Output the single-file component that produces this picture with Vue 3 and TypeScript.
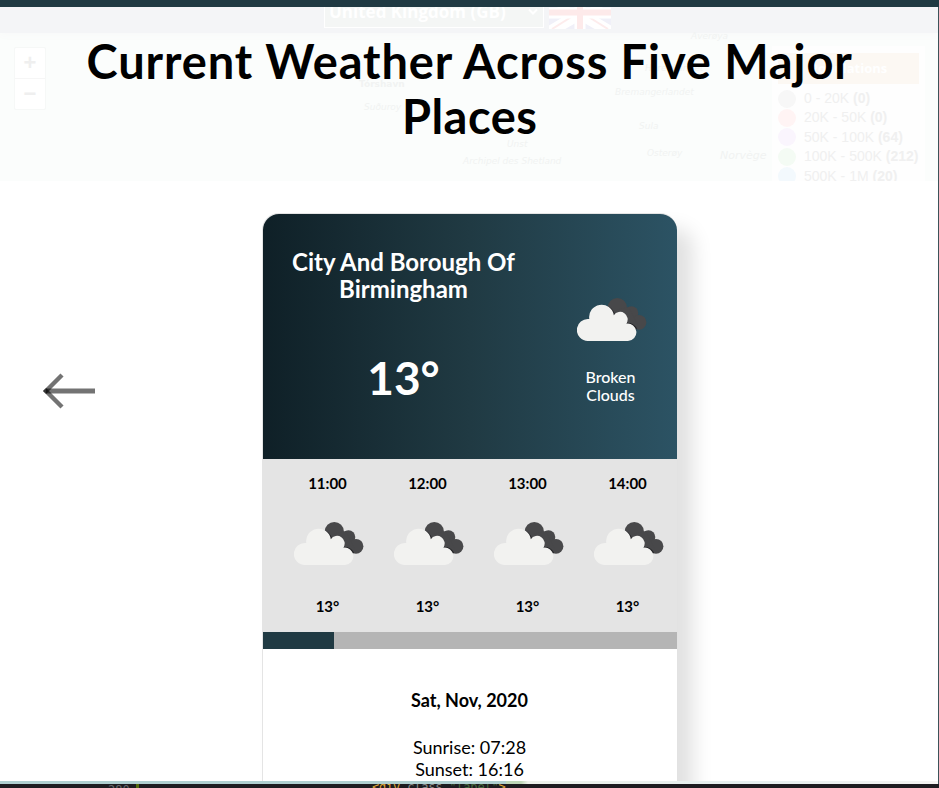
<script setup lang="ts">
import { defineComponent, h } from 'vue'

interface Hour {
  time: string
  temp: string
}

const hours: Hour[] = ['11:00', '12:00', '13:00', '14:00'].map((time) => ({ time, temp: '13°' }))

const legend = [
  { label: '0 - 20K', count: 0, tone: 'grey' },
  { label: '20K - 50K', count: 0, tone: 'red' },
  { label: '50K - 100K', count: 64, tone: 'purple' },
  { label: '100K - 500K', count: 212, tone: 'green' },
  { label: '500K - 1M', count: 20, tone: 'blue' },
]

const places = [
  { name: 'Tórshavn', cls: 'torshavn' },
  { name: 'Suðuroy', cls: 'suduroy' },
  { name: 'Unst', cls: 'unst' },
  { name: 'Archipel des Shetland', cls: 'shetland' },
  { name: 'Averøya', cls: 'averoya' },
  { name: 'Hareidlandet', cls: 'hareid' },
  { name: 'Bremangerlandet', cls: 'bremanger' },
  { name: 'Sula', cls: 'sula' },
  { name: 'Osterøy', cls: 'osteroy' },
  { name: 'Norvège', cls: 'norvege' },
]

const light =
  'M11 43A11 11 0 1 1 12.3 21.1A12.3 12.3 0 1 1 36.8 17.2A7.2 7.2 0 0 1 49.4 25.7A8.7 8.7 0 1 1 51 43Z'

const CloudIcon = defineComponent({
  render: () =>
    h('svg', { width: 70, height: 44, viewBox: '0 0 70 44' }, [
      h('g', { fill: '#48484a' }, [
        h('circle', { cx: 40.3, cy: 9.6, r: 9.6 }),
        h('circle', { cx: 54.5, cy: 15, r: 6.8 }),
        h('circle', { cx: 62, cy: 24.3, r: 7.4 }),
        h('path', { d: 'M38 12L52 9L61 28L56 30L38 22Z' }),
      ]),
      h('path', {
        d: 'M31 9.2Q36.8 12.5 37.4 17.6Q45 15 49.5 21.5L50 25.6Q56 25.5 59.5 31',
        fill: 'none',
        stroke: '#252528',
        'stroke-width': 1.5,
      }),
      h('path', { d: light, fill: '#f2f2f0' }),
    ]),
})
</script>

<template>
  <div class="screen">
    <div class="topbar"></div>
    <header class="heading">
      <div class="backdrop" aria-hidden="true">
        <div class="navband"></div>
        <div class="country"><span>United Kingdom (GB)</span>
          <svg width="10" height="8" viewBox="0 0 10 8"><path d="M1 1.5L5 5.5L9 1.5" fill="none" stroke="#fff" stroke-width="2" /></svg>
        </div>
        <svg class="flag" width="62" height="22" viewBox="0 0 62 22">
          <rect width="62" height="22" fill="#f0f0f8" />
          <path d="M0 22L25 7M62 22L37 7M0-8L62 28M62-8L0 28" stroke="#fff" stroke-width="6" />
          <path d="M3 22L27 7M59 22L35 7" stroke="#fdecec" stroke-width="2" />
          <path d="M31 0V22M0 6H62" stroke="#fff" stroke-width="11" />
          <path d="M31 0V22M0 5.5H62" stroke="#fdeaea" stroke-width="6" />
        </svg>
        <div class="zoom"><span>+</span><span>−</span></div>
        <span v-for="p in places" :key="p.name" class="place" :class="p.cls">{{ p.name }}</span>
        <div class="legend">
          <div class="legend-title">Populations</div>
          <div v-for="l in legend" :key="l.label" class="legend-row">
            <i :class="l.tone"></i><span>{{ l.label }} <b>({{ l.count }})</b></span>
          </div>
        </div>
      </div>
      <h1><span class="t1">Current Weather Across Five Major</span><br /><span class="t2">Places</span></h1>
    </header>

    <main class="stage">
      <button class="prev" aria-label="Previous">
        <svg width="54" height="38" viewBox="0 0 54 38">
          <g stroke="#000" stroke-opacity=".55" stroke-width="5" fill="none">
            <path d="M4 19H53" />
            <path d="M2.5 20.5L20 3" stroke-width="4.4" />
            <path d="M2.5 17.5L20 35" stroke-width="4.4" />
          </g>
        </svg>
      </button>
      <article class="card">
        <section class="hero">
          <div class="summary">
            <h2><span>City And Borough Of</span><br /><span class="c2">Birmingham</span></h2>
            <div class="temp">13°</div>
          </div>
          <div class="condition">
            <CloudIcon />
            <p>Broken<br />Clouds</p>
          </div>
        </section>
        <section class="hours">
          <div v-for="x in hours" :key="x.time" class="hour">
            <strong>{{ x.time }}</strong>
            <CloudIcon class="hour-icon" />
            <strong>{{ x.temp }}</strong>
          </div>
        </section>
        <div class="track"><div class="thumb"></div></div>
        <section class="details">
          <h3>Sat, Nov, 2020</h3>
          <p>Sunrise: 07:28</p>
          <p class="sunset">Sunset: 16:16</p>
        </section>
      </article>
    </main>
    <div class="mapstrip"><div></div></div>
    <footer class="editor"><span class="line">280</span><i></i><code><b>&lt;div</b> class <em>"label"</em><b>&gt;</b></code></footer>
    <div class="edge"></div>
  </div>
</template>

<style>
body { margin: 0; overflow: hidden; background: #fff; }
</style>

<style scoped>
.screen { position: relative; width: 939px; height: 788px; overflow: hidden; display: flex; flex-direction: column; background: #fff; font-family: Lato, "Open Sans", sans-serif; color: #000; }
.topbar { height: 7px; flex: none; background: #203a43; }
.heading { position: relative; height: 174px; flex: none; overflow: hidden; background: #fbfdfc; }
.backdrop { position: absolute; inset: 0; }
.navband { height: 26px; background: #f4f5f7; box-shadow: 0 2px 8px #f8f9f9; }
.country { position: absolute; left: 324px; top: -12px; width: 218px; height: 33px; border: 1px solid #fff; background: #f4f6f5; color: #fff; display: flex; justify-content: space-between; align-items: center; padding: 0 5px 0 4px; box-sizing: border-box; font: bold 17px/33px "Open Sans", sans-serif; width: 220px; }
.flag { position: absolute; left: 549px; top: 0; }
.zoom { position: absolute; left: 14px; top: 40px; width: 30px; height: 61px; border: 1px solid #f6f8f7; border-radius: 2px; background: #fff; color: #efefef; display: flex; flex-direction: column; text-align: center; font: bold 22px/30px "Liberation Sans", sans-serif; }
.zoom span + span { border-top: 1px solid #f6f6f6; }
.place { position: absolute; color: #f1f3f2; font: italic 9px/11px "DejaVu Sans", sans-serif; white-space: nowrap; }
.torshavn { left: 359px; top: 72px; font-style: normal; font-weight: bold; }
.suduroy { left: 364px; top: 95px; }
.unst { left: 507px; top: 132px; }
.shetland { left: 463px; top: 149px; }
.averoya { left: 691px; top: 24px; }
.hareid { left: 645px; top: 56px; }
.bremanger { left: 615px; top: 80px; }
.sula { left: 639px; top: 114px; }
.osteroy { left: 647px; top: 141px; }
.norvege { left: 720px; top: 143px; font-size: 11px; }
.legend { position: absolute; left: 772px; top: 39px; width: 153px; height: 160px; padding: 7px 6px 0; box-sizing: border-box; background: #fefefe; color: #f0f0f0; font: 14px/19.4px "Liberation Sans", sans-serif; }
.legend-title { height: 31px; margin-bottom: 5px; background: #fcf8f3; color: #fff; text-align: center; font: bold 13px/31px "Open Sans", sans-serif; }
.legend-row { display: flex; align-items: center; height: 19.4px; gap: 8px; white-space: nowrap; }
.legend-row i { width: 18px; height: 18px; border-radius: 50%; flex: none; }
.grey { background: #f7f7f7; } .red { background: #fff4f4; } .purple { background: #faf5fd; } .green { background: #f4fbf4; } .blue { background: #f3f9fd; }
h1 { position: relative; margin: 0; padding-top: 27px; text-align: center; font-size: 47px; line-height: 55px; font-weight: 700; }
h1 span { margin-right: -0.3px; }
.t1 { letter-spacing: 0.9px; }
.t2 { letter-spacing: 0.5px; }
.stage { position: relative; flex: 1; min-height: 0; overflow: hidden; display: flex; justify-content: center; padding-top: 32px; }
.prev { position: absolute; left: 42px; top: 191px; padding: 0; border: 0; background: none; height: 38px; }
svg { display: block; flex: none; }
.card { width: 414px; height: 700px; flex: none; border: 1px solid #e4e4e4; border-right: 0; border-radius: 17px 17px 0 0; overflow: hidden; background: #fff; box-shadow: 16px 16px 20px #e1e1e1; margin-right: 1px; }
.hero { height: 245px; background: linear-gradient(to right, #0f2027, #203a43 50%, #2c5364); color: #fff; display: flex; text-align: center; }
.summary { width: 282px; }
h2 { margin: 34px 0 0; font-size: 24px; line-height: 27px; font-weight: 700; white-space: nowrap; }
.temp { margin-top: 48px; font-size: 46px; line-height: 56px; font-weight: 700; }
.condition { width: 132px; padding: 84px 0 0 32px; box-sizing: border-box; }
.condition p { margin: 26px 0 0; width: 67px; text-align: center; padding-left: 1px; box-sizing: border-box; font-size: 16px; line-height: 18px; font-weight: 500; }
.hours { height: 173px; background: #e4e4e4; display: flex; padding-left: 15px; }
.hour { width: 100px; flex: none; display: flex; flex-direction: column; align-items: center; padding-top: 14px; box-sizing: border-box; }
.hour strong { font-size: 15px; line-height: 20px; }
.hour-icon { margin: 29px 0 30px 3px; }
.track { height: 17px; background: #b5b5b5; }
.thumb { width: 71px; height: 17px; background: #203a43; }
.details { text-align: center; padding-top: 39px; }
h3 { margin: 0 0 24px; font-size: 18px; line-height: 24px; }
.details p { margin: 0; font-size: 18px; line-height: 22px; }
.mapstrip { height: 3px; flex: none; background: #afcfd0; display: flex; justify-content: flex-end; }
.mapstrip div { width: 433px; background: linear-gradient(to right, #bed7b8 0 15px, #edf2eb 22px, #e5efef 240px, #f4f4f2); }
.editor { position: relative; height: 4px; flex: none; overflow: hidden; background: #1d1c20; color: #66666a; font: 12px/12px "DejaVu Sans Mono", monospace; display: flex; }
.line { margin-left: 108px; width: 28px; }
.editor i { width: 3px; background: #536b0d; margin-right: 233px; }
.editor code { font: inherit; color: #888; letter-spacing: -0.2px; margin-top: -3px; white-space: nowrap; }
.editor b { color: #dca436; font-weight: 400; }
.editor em { color: #45663c; font-style: normal; }
.edge { position: absolute; right: 0; top: 7px; width: 1px; height: 777px; background: #3b5359; }
</style>
